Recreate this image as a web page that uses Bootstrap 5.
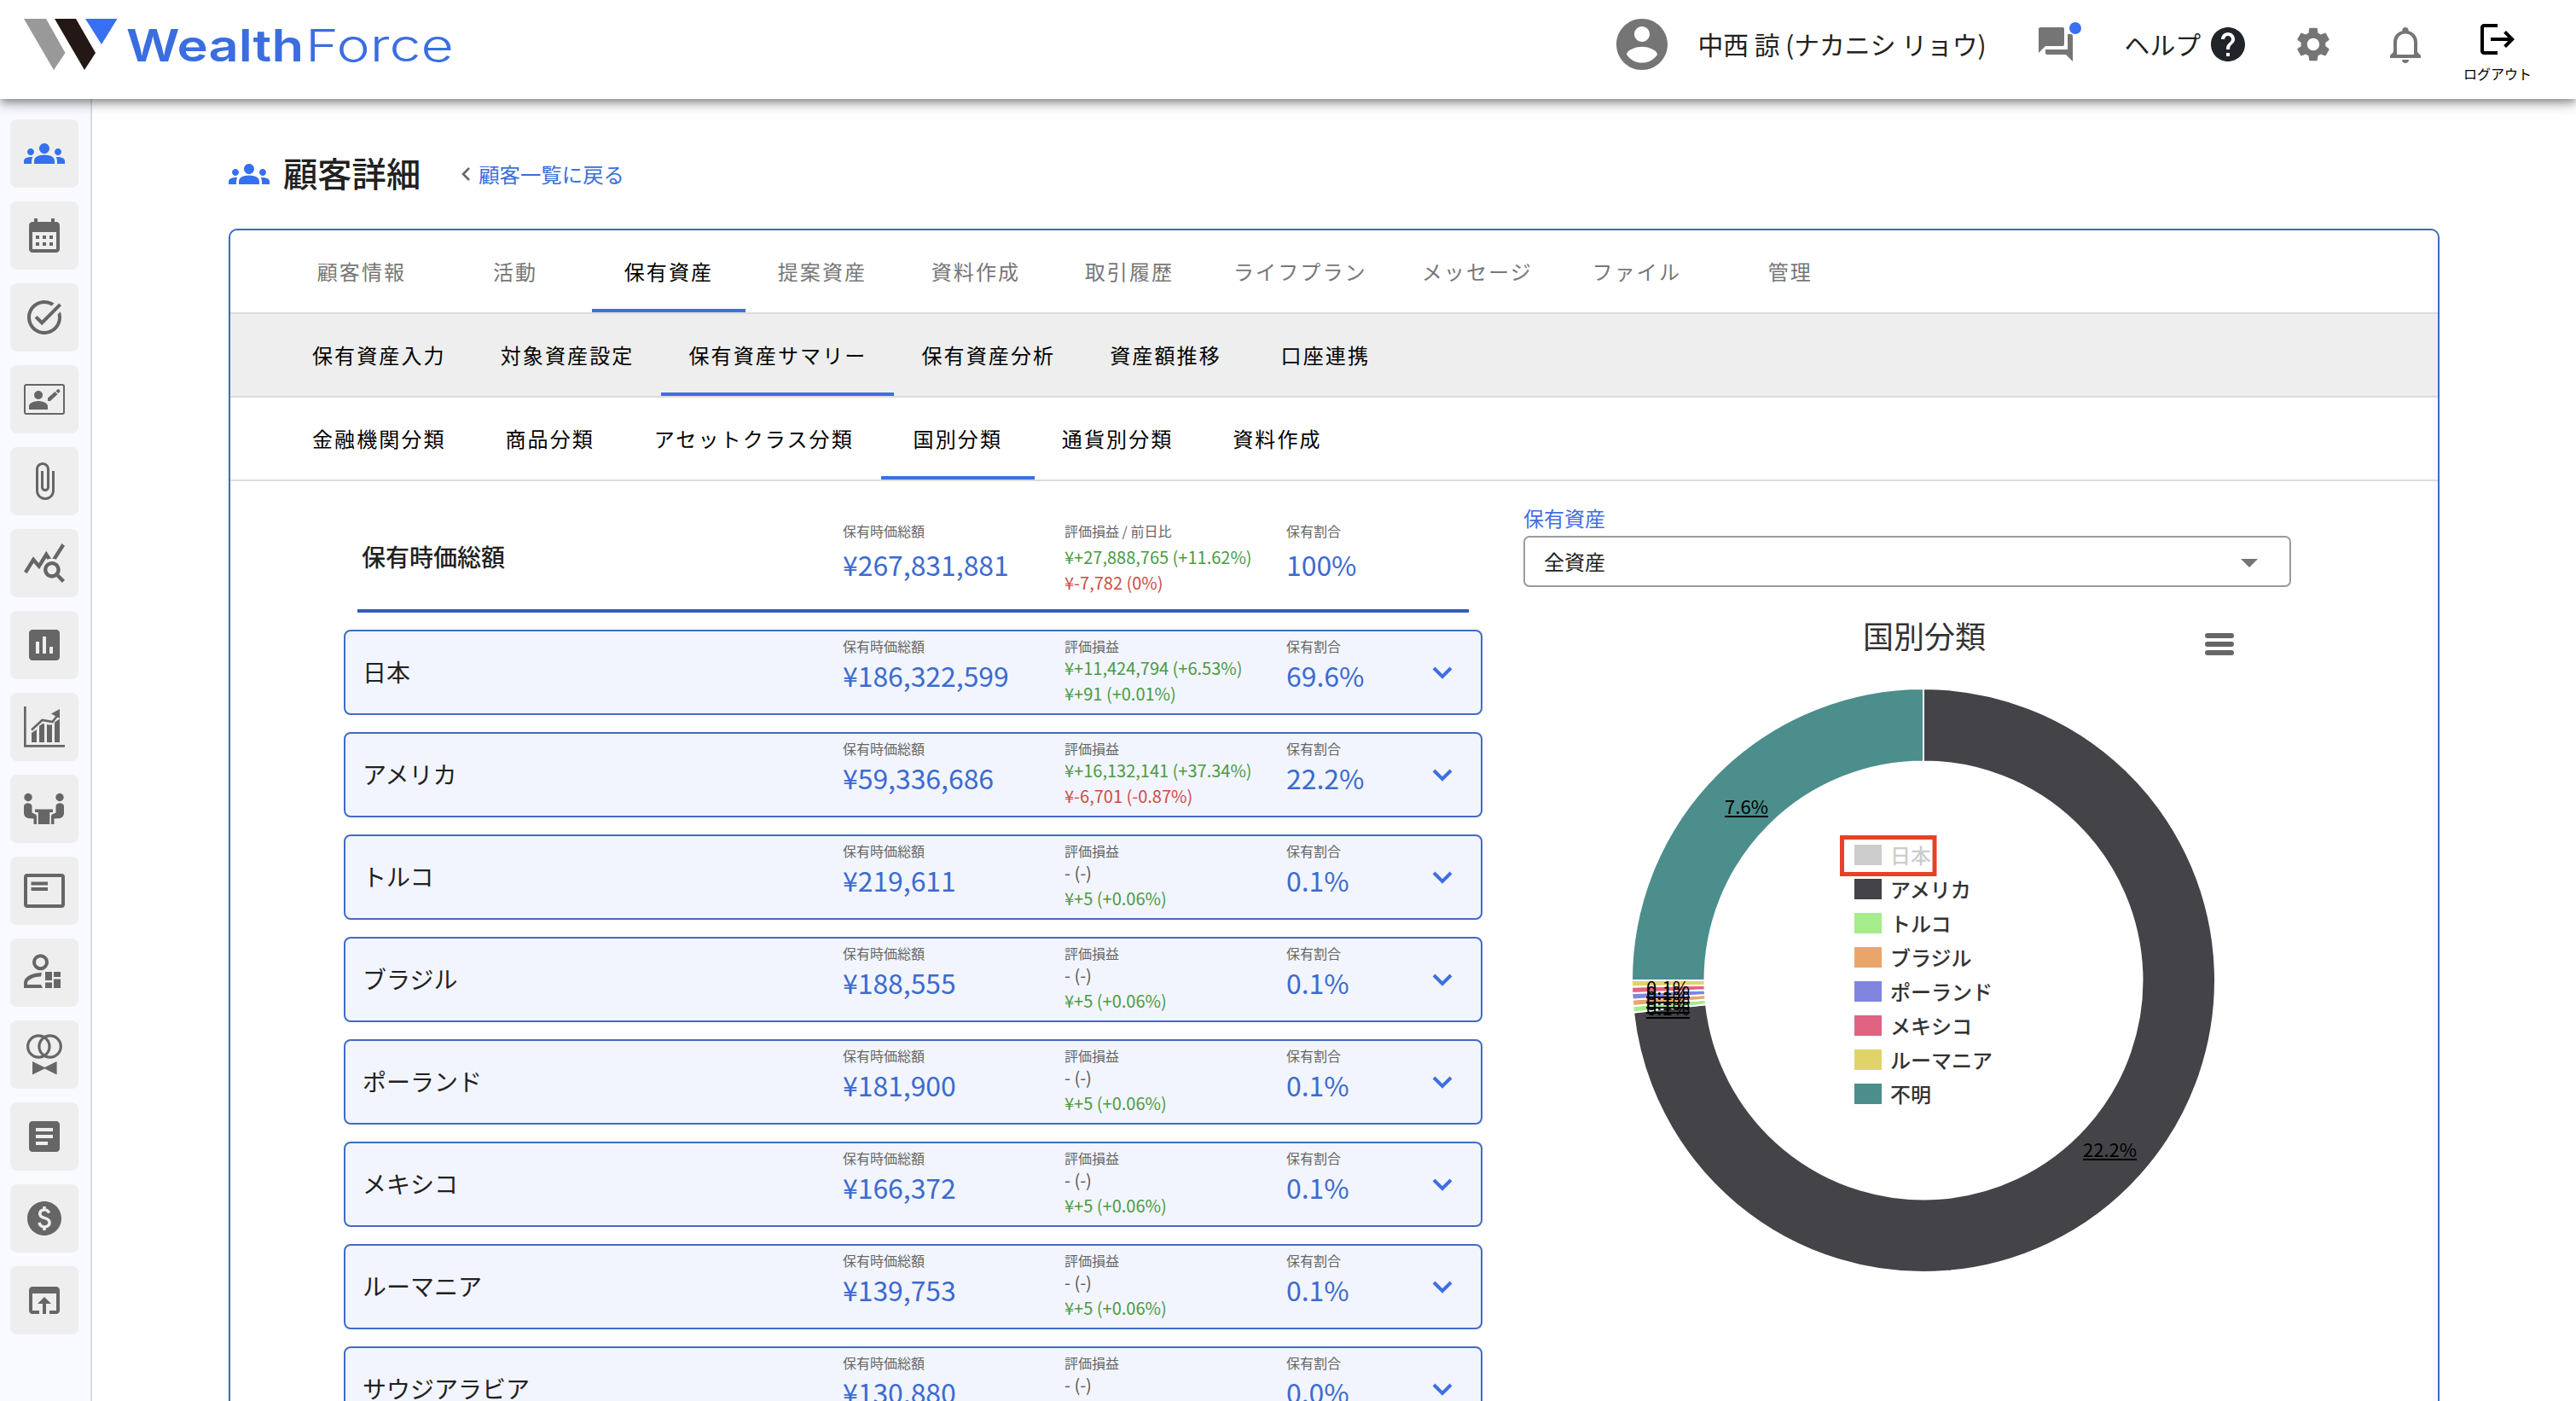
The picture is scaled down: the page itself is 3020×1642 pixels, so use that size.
<!DOCTYPE html>
<html lang="ja">
<head>
    <meta charset="UTF-8">
    <meta name="viewport" content="width=device-width, initial-scale=1.0">
    <title>顧客詳細 - WealthForce</title>
    <link href="https://cdn.jsdelivr.net/npm/bootstrap@5.3.0/dist/css/bootstrap.min.css" rel="stylesheet">
    <style>
        body {
            font-family: "Noto Sans CJK JP", "Noto Sans", sans-serif;
            font-size: 24px;
            line-height: 1.25;
            color: #212121;
            background-color: #fff;
            height: 1642px;
            overflow: hidden;
        }

        svg {
            display: block;
            flex-shrink: 0;
        }

        .i48 {
            width: 48px;
            height: 48px;
            fill: currentColor;
        }

        /* Header */
        .app-header {
            height: 116px;
            z-index: 10;
            padding-left: 28px;
            background-color: #fff;
            box-shadow: 0 4px 8px -2px rgba(0, 0, 0, 0.3), 0 8px 10px rgba(0, 0, 0, 0.16), 0 2px 20px rgba(0, 0, 0, 0.14);
        }

        .header-tools {
            height: 104px;
            color: #757575;
        }

        .header-name {
            font-size: 29.8px;
            color: #212121;
            margin-left: 29px;
        }

        .msg-dot {
            width: 14px;
            height: 14px;
            top: -2px;
            right: -6px;
            background-color: #3770f5;
        }

        .logout-box {
            width: 80px;
            color: #000;
            font-size: 16px;
        }

        /* Side menu */
        .side-menu {
            width: 108px;
            height: 1526px;
            padding: 24px 12px;
            gap: 16px;
            background-color: #f8faff;
            border-right: 2px solid #dadbe3;
        }

        .side-btn {
            width: 80px;
            height: 80px;
            border-radius: 8px;
            background-color: #eee;
            color: #666;
        }

        .side-btn.active,
        .title-icon {
            color: #3770ee;
        }

        /* Page title */
        .page-main {
            padding: 24px 160px 0;
        }

        .title-row {
            height: 128px;
        }

        .title-row h1 {
            font-size: 40.3px;
            font-weight: 500;
            margin: -3px 0 0 16px;
        }

        .back-link {
            font-size: 24.4px;
            color: #3a6fd8;
            text-decoration: none;
        }

        /* Panel and tabs */
        .detail-panel {
            height: 1500px;
            border: 2px solid #4069c0;
            border-radius: 10px;
        }

        .tab-row {
            height: 98px;
            padding-left: 64px;
            border-bottom: 2px solid #dcdcdc;
        }

        .tab-row.sub {
            background-color: #eee;
        }

        .tab-row a {
            min-width: 180px;
            padding: 0 32px;
            letter-spacing: 2.12px;
            color: #000;
            text-decoration: none;
            border-bottom: 4px solid transparent;
            border-top: 4px solid transparent;
        }

        .tab-row.top a {
            color: #777;
        }

        .tab-row.top a.active {
            color: #000;
        }

        .tab-row a.active {
            border-bottom-color: #3f6fe0;
        }

        /* Holdings list */
        .holdings {
            width: 1335px;
            margin-left: 133px;
        }

        .total-row {
            height: 154px;
            margin: 0 16px 20px;
            padding-left: 5px;
            border-bottom: 4px solid #365bbf;
        }

        .asset-row {
            height: 100px;
            margin-bottom: 20px;
            padding-left: 20px;
            border: 2px solid #426bc6;
            border-radius: 8px;
            background-color: #f2f5fd;
        }

        .asset-name {
            width: 563px;
            margin-top: -1px;
            font-size: 28px;
        }

        .total-row .asset-name {
            width: 564px;
            font-weight: 500;
            padding-top: 27px;
        }

        .col-fig {
            width: 260px;
            padding-top: 7px;
            white-space: nowrap;
        }

        .total-row .col-fig {
            padding-top: 48px;
        }

        .col-ratio {
            width: 158px;
        }

        .fig-label {
            font-size: 16px;
            line-height: 20px;
            color: #666;
        }

        .fig-big {
            font-size: 31.9px;
            line-height: 40px;
            color: #3c6bd0;
            padding-top: 4px;
        }

        .fig-small {
            font-size: 20px;
            line-height: 30px;
        }

        .fig-label + .fig-small {
            padding-top: 1px;
        }

        .total-row .fig-big {
            padding-top: 9px;
        }

        .total-row .fig-label + .fig-small {
            padding-top: 6px;
        }

        .up {
            color: #4b9a43;
        }

        .down {
            color: #cf4b43;
        }

        .fig-none {
            color: #555;
        }

        /* Chart column */
        .chart-col {
            width: 900px;
            margin-left: 48px;
            padding-top: 28px;
        }

        .filter-label {
            color: #3f6fe0;
            height: 36px;
            line-height: 30px;
        }

        .filter-select {
            height: 60px;
            padding: 0 37px 0 22px;
            border: 2px solid #9b9b9b;
            border-radius: 7px;
        }

        .chart-col svg text {
            font-family: "Noto Sans CJK JP", sans-serif;
        }
    </style>
</head>
<body>
    <header class="app-header position-relative d-flex justify-content-between">
        <svg width="520" height="104" viewBox="28 0 520 104">
            <path fill="#999" d="M28 22h26l22.5 40L63 82z" />
            <path fill="#231815" d="M64 22h25l23 40-13 20z" />
            <path fill="#3770f0" d="M100 22h37.5L119 52z" />
            <g font-family="Inter, sans-serif" font-size="52" fill="#3a6ee0">
                <text x="148" y="72" font-weight="600" textLength="208" lengthAdjust="spacingAndGlyphs">Wealth</text>
                <text x="358" y="72" font-weight="300" textLength="174" lengthAdjust="spacingAndGlyphs">Force</text>
            </g>
        </svg>
        <div class="header-tools d-flex align-items-center">
            <svg width="72" height="72" viewBox="0 0 24 24" fill="currentColor"><path d="M12 2C6.48 2 2 6.48 2 12s4.48 10 10 10 10-4.48 10-10S17.52 2 12 2zm0 3c1.66 0 3 1.34 3 3s-1.34 3-3 3-3-1.34-3-3 1.34-3 3-3zm0 14.2c-2.5 0-4.71-1.28-6-3.22.03-1.99 4-3.08 6-3.08 1.99 0 5.97 1.09 6 3.08-1.29 1.94-3.5 3.22-6 3.22z" /></svg>
            <span class="header-name text-nowrap">中西 諒 (ナカニシ リョウ)</span>
            <div class="position-relative" style="margin-left: 57px">
                <svg class="i48" viewBox="0 0 24 24"><path d="M21 6h-2v9H6v2c0 .55.45 1 1 1h11l4 4V7c0-.55-.45-1-1-1zm-4 6V3c0-.55-.45-1-1-1H3c-.55 0-1 .45-1 1v14l4-4h10c.55 0 1-.45 1-1z" /></svg>
                <span class="msg-dot position-absolute rounded-circle"></span>
            </div>
            <span class="header-name text-nowrap" style="margin-left: 57px">ヘルプ</span>
            <svg class="i48 text-dark ms-2" viewBox="0 0 24 24"><path d="M12 2C6.48 2 2 6.48 2 12s4.48 10 10 10 10-4.48 10-10S17.52 2 12 2zm1 17h-2v-2h2v2zm2.07-7.75-.9.92C13.45 12.9 13 13.5 13 15h-2v-.5c0-1.1.45-2.1 1.17-2.83l1.24-1.26c.37-.36.59-.86.59-1.41 0-1.1-.9-2-2-2s-2 .9-2 2H8c0-2.21 1.79-4 4-4s4 1.79 4 4c0 .88-.36 1.68-.93 2.25z" /></svg>
            <svg class="i48" style="margin-left: 52px" viewBox="0 0 24 24"><path d="M19.14 12.94c.04-.3.06-.61.06-.94 0-.32-.02-.64-.07-.94l2.03-1.58c.18-.14.23-.41.12-.61l-1.92-3.32c-.12-.22-.37-.29-.59-.22l-2.39.96c-.5-.38-1.03-.7-1.62-.94l-.36-2.54c-.04-.24-.24-.41-.48-.41h-3.84c-.24 0-.43.17-.47.41l-.36 2.54c-.59.24-1.13.57-1.62.94l-2.39-.96c-.22-.08-.47 0-.59.22L2.74 8.87c-.12.21-.08.47.12.61l2.03 1.58c-.05.3-.09.63-.09.94s.02.64.07.94l-2.03 1.58c-.18.14-.23.41-.12.61l1.92 3.32c.12.22.37.29.59.22l2.39-.96c.5.38 1.03.7 1.62.94l.36 2.54c.05.24.24.41.48.41h3.84c.24 0 .44-.17.47-.41l.36-2.54c.59-.24 1.13-.56 1.62-.94l2.39.96c.22.08.47 0 .59-.22l1.92-3.32c.12-.22.07-.47-.12-.61l-2.01-1.58zM12 15.6c-1.98 0-3.6-1.62-3.6-3.6s1.62-3.6 3.6-3.6 3.6 1.62 3.6 3.6-1.62 3.6-3.6 3.6z" /></svg>
            <svg width="36" height="42" style="margin: 2px 0 0 66px" viewBox="0 0 36 42" fill="currentColor"><path fill-rule="evenodd" d="M18 0c2 0 3.7 1.6 3.7 3.6v.7C28 6 32 11 32 17v12l4 4v3H0v-3l4-4V17C4 11 8 6 14.3 4.3v-.7C14.3 1.6 16 0 18 0zm0 7.5c-6 0-10 4.5-10 10.500V32h20V18c0-6-4-10.500-10-10.500zM14 38h8c0 2.500-2 4-4 4s-4-1.500-4-4z" /></svg>
            <div class="logout-box d-flex flex-column align-items-center" style="margin: 13px 52px 0 50px">
                <svg class="i48" viewBox="0 0 24 24"><path d="m17 7-1.41 1.41L18.17 11H8v2h10.17l-2.58 2.58L17 17l5-5zM4 5h8V3H4c-1.1 0-2 .9-2 2v14c0 1.1.9 2 2 2h8v-2H4V5z" /></svg>
                <span class="text-nowrap" style="margin-top: 6px">ログアウト</span>
            </div>
        </div>
    </header>

    <div class="d-flex">
        <nav class="side-menu d-flex flex-column flex-shrink-0" id="side-menu"></nav>

        <main class="page-main flex-grow-1">
            <div class="title-row d-flex align-items-center">
                <svg class="i48 title-icon" viewBox="0 0 24 24"><path id="groups-path" d="M12 12.75c1.63 0 3.07.39 4.24.9 1.08.48 1.76 1.56 1.76 2.73V18H6v-1.61c0-1.18.68-2.26 1.76-2.73 1.17-.52 2.61-.91 4.24-.91zM4 13c1.1 0 2-.9 2-2s-.9-2-2-2-2 .9-2 2 .9 2 2 2zm1.13 1.1c-.37-.06-.74-.1-1.13-.1-.99 0-1.93.21-2.78.58C.48 14.9 0 15.62 0 16.43V18h4.5v-1.61c0-.83.23-1.61.63-2.29zM20 13c1.1 0 2-.9 2-2s-.9-2-2-2-2 .9-2 2 .9 2 2 2zm4 3.43c0-.81-.48-1.53-1.22-1.85-.85-.37-1.79-.58-2.78-.58-.39 0-.76.04-1.13.1.4.68.63 1.46.63 2.29V18H24v-1.57zM12 6c1.66 0 3 1.34 3 3s-1.34 3-3 3-3-1.34-3-3 1.34-3 3-3z" /></svg>
                <h1>顧客詳細</h1>
                <svg width="12" height="18" viewBox="0 0 12 18" style="margin: 0 9px 0 47px"><path d="M10 2 3 9l7 7" fill="none" stroke="#666" stroke-width="2.5" /></svg>
                <a class="back-link" href="#">顧客一覧に戻る</a>
            </div>

            <div class="detail-panel">
                <nav class="tab-row top d-flex">
                    <a href="#" class="d-flex align-items-center justify-content-center">顧客情報</a>
                    <a href="#" class="d-flex align-items-center justify-content-center">活動</a>
                    <a href="#" class="d-flex align-items-center justify-content-center active">保有資産</a>
                    <a href="#" class="d-flex align-items-center justify-content-center">提案資産</a>
                    <a href="#" class="d-flex align-items-center justify-content-center">資料作成</a>
                    <a href="#" class="d-flex align-items-center justify-content-center">取引履歴</a>
                    <a href="#" class="d-flex align-items-center justify-content-center">ライフプラン</a>
                    <a href="#" class="d-flex align-items-center justify-content-center">メッセージ</a>
                    <a href="#" class="d-flex align-items-center justify-content-center">ファイル</a>
                    <a href="#" class="d-flex align-items-center justify-content-center">管理</a>
                </nav>
                <nav class="tab-row sub d-flex">
                    <a href="#" class="d-flex align-items-center justify-content-center">保有資産入力</a>
                    <a href="#" class="d-flex align-items-center justify-content-center">対象資産設定</a>
                    <a href="#" class="d-flex align-items-center justify-content-center active">保有資産サマリー</a>
                    <a href="#" class="d-flex align-items-center justify-content-center">保有資産分析</a>
                    <a href="#" class="d-flex align-items-center justify-content-center">資産額推移</a>
                    <a href="#" class="d-flex align-items-center justify-content-center">口座連携</a>
                </nav>
                <nav class="tab-row d-flex">
                    <a href="#" class="d-flex align-items-center justify-content-center">金融機関分類</a>
                    <a href="#" class="d-flex align-items-center justify-content-center">商品分類</a>
                    <a href="#" class="d-flex align-items-center justify-content-center">アセットクラス分類</a>
                    <a href="#" class="d-flex align-items-center justify-content-center active">国別分類</a>
                    <a href="#" class="d-flex align-items-center justify-content-center">通貨別分類</a>
                    <a href="#" class="d-flex align-items-center justify-content-center">資料作成</a>
                </nav>

                <div class="d-flex">
                    <section class="holdings flex-shrink-0" id="holdings">
                        <div class="total-row d-flex">
                            <div class="asset-name align-self-center">保有時価総額</div>
                            <div class="col-fig">
                                <div class="fig-label">保有時価総額</div>
                                <div class="fig-big">¥267,831,881</div>
                            </div>
                            <div class="col-fig">
                                <div class="fig-label">評価損益 / 前日比</div>
                                <div class="fig-small up">¥+27,888,765 (+11.62%)</div>
                                <div class="fig-small down">¥-7,782 (0%)</div>
                            </div>
                            <div class="col-fig col-ratio">
                                <div class="fig-label">保有割合</div>
                                <div class="fig-big">100%</div>
                            </div>
                        </div>
                    </section>

                    <section class="chart-col flex-shrink-0">
                        <div class="filter-label">保有資産</div>
                        <div class="filter-select d-flex align-items-center justify-content-between">
                            <span>全資産</span>
                            <svg width="20" height="10" viewBox="0 0 20 10" style="margin-top: 4px"><path d="M0 0h20L10 10z" fill="#757575" /></svg>
                        </div>
                        <svg width="900" height="850" viewBox="0 0 900 850" id="chart">
                            <text x="470" y="71.5" font-size="36" text-anchor="middle" fill="#333">国別分類</text>
                            <path d="M802 57h28M802 67h28M802 77h28" stroke="#666" stroke-width="6" stroke-linecap="round" />
                        </svg>
                    </section>
                </div>
            </div>
        </main>
    </div>

    <script src="https://cdn.jsdelivr.net/npm/bootstrap@5.3.0/dist/js/bootstrap.bundle.min.js"></script>
    <script>
        // Side menu icons: [viewBox, svg content]
        const menuIcons = [
            ['0 0 24 24', '<path d="' + document.getElementById('groups-path').getAttribute('d') + '"/>'],
            ['0 0 24 24', '<path d="M19 4h-1V2h-2v2H8V2H6v2H5c-1.11 0-1.99.9-1.99 2L3 20c0 1.1.89 2 2 2h14c1.1 0 2-.9 2-2V6c0-1.1-.9-2-2-2zm0 16H5V10h14v10zM9 14H7v-2h2v2zm4 0h-2v-2h2v2zm4 0h-2v-2h2v2zm-8 4H7v-2h2v2zm4 0h-2v-2h2v2zm4 0h-2v-2h2v2z"/>'],
            ['0 0 24 24', '<path d="M22 5.18 10.59 16.6l-4.24-4.24 1.41-1.41 2.83 2.83 10-10L22 5.18zm-2.21 5.04c.13.57.21 1.17.21 1.78 0 4.42-3.58 8-8 8s-8-3.58-8-8 3.58-8 8-8c1.58 0 3.04.46 4.28 1.25l1.44-1.44C16.1 2.67 14.13 2 12 2 6.48 2 2 6.48 2 12s4.48 10 10 10 10-4.48 10-10c0-1.19-.22-2.33-.6-3.39l-1.61 1.61z"/>'],
            ['0 0 48 48', '<rect x="1" y="7" width="46" height="34" rx="2" fill="none" stroke="currentColor" stroke-width="2"/><circle cx="17" cy="19" r="5"/><path d="M6 36v-4c0-4 7-6 11-6s11 2 11 6v4zM28 26v-3.5l8.5-7.5 3 3-8.5 8zM37.5 14.2l2-1.8c.6-.5 1.2-.5 1.7 0l1 1.1c.5.5.4 1.1-.1 1.6l-1.8 1.8z"/>'],
            ['0 0 24 24', '<path d="M16.5 6v11.5c0 2.21-1.79 4-4 4s-4-1.79-4-4V5c0-1.38 1.12-2.5 2.5-2.5s2.5 1.12 2.5 2.5v10.5c0 .55-.45 1-1 1s-1-.45-1-1V6H10v9.5c0 1.38 1.12 2.5 2.5 2.5s2.5-1.12 2.5-2.5V5c0-2.21-1.79-4-4-4S7 2.79 7 5v12.5c0 3.04 2.46 5.5 5.5 5.5s5.5-2.46 5.5-5.5V6h-1.5z"/>'],
            ['1 1.5 22 22', '<path d="M19.88 18.47c.44-.7.7-1.51.7-2.39 0-2.49-2.01-4.5-4.5-4.5s-4.5 2.01-4.5 4.5 2.01 4.5 4.49 4.5c.88 0 1.7-.26 2.39-.7L21.58 23 23 21.58l-3.12-3.11zm-3.8.11c-1.38 0-2.5-1.12-2.5-2.5s1.12-2.5 2.5-2.5 2.5 1.12 2.5 2.5-1.12 2.5-2.5 2.5zm-.36-8.5c-.74.02-1.45.18-2.1.45l-.55-.83-3.8 6.18-3.01-3.52-3.63 5.81L1 17l5-8 3 3.5L13 6l2.72 4.08zm2.59.5c-.64-.28-1.33-.45-2.05-.49L21.38 2 23 3.18l-4.69 7.4z"/>'],
            ['0 0 24 24', '<path d="M19 3H5c-1.1 0-2 .9-2 2v14c0 1.1.9 2 2 2h14c1.1 0 2-.9 2-2V5c0-1.1-.9-2-2-2zM9 17H7v-7h2v7zm4 0h-2V7h2v10zm4 0h-2v-4h2v4z"/>'],
            ['0 0 48 48', '<path d="M0 0h2.7v45H48v2.7H0zM9 42V31l6-4v15zM18 42V23l4-3 2 .6V42zM27 42V21l4 .8 2-.8v21zM36 42V18.5l6-4V42z"/><path d="M9 27.5 21.5 16l12 2L39 11" fill="none" stroke="currentColor" stroke-width="2.6"/><path d="M32 8.5 42 3v11z"/>'],
            ['0 0 48 48', '<circle cx="5" cy="10.5" r="4.7"/><circle cx="42" cy="10.5" r="4.7"/><path d="M0 21c0-5 9.5-5 9.5 0v7.5l3.5 1.5c1.5.6 2 1.5 2 3v9h-3.5v-6.5L5 35c-3-.5-5-3-5-6zM47 21c0-5-9.5-5-9.5 0v7.5L34 30c-1.5.6-2 1.5-2 3v9h3.5v-6.5L42 35c3-.5 5-3 5-6zM13 24.5h21V28h-3.7v14H16.7V28H13z"/>'],
            ['0 0 48 48', '<rect x="2" y="6" width="44" height="36" rx="2" fill="none" stroke="currentColor" stroke-width="4"/><path d="M8.5 13.5H28v4H8.5zM8.5 20H28v4H8.5z"/>'],
            ['0 0 48 48', '<circle cx="19.5" cy="11.7" r="7.5" fill="none" stroke="currentColor" stroke-width="4"/><path d="M21 24C11 24 0 28 0 36v6h22l-2-4H4v-2c0-3 7-7.5 16-7.5zM25 23h8v10h-8zM35 23h8v6h-8zM25 35.5h8V42h-8zM35 31.5h8V42h-8z"/>'],
            ['0 0 48 48', '<circle cx="17.3" cy="14.5" r="12.7" fill="none" stroke="currentColor" stroke-width="3.2"/><circle cx="30.6" cy="14.5" r="12.7" fill="none" stroke="currentColor" stroke-width="3.2"/><path d="M10 32v15.5l14.3-7 14.3 7V32l-14.3 7z"/>'],
            ['0 0 24 24', '<path d="M19 3H5c-1.1 0-2 .9-2 2v14c0 1.1.9 2 2 2h14c1.1 0 2-.9 2-2V5c0-1.1-.9-2-2-2zm-5 14H7v-2h7v2zm3-4H7v-2h10v2zm0-4H7V7h10v2z"/>'],
            ['0 0 24 24', '<path d="M12 2C6.48 2 2 6.48 2 12s4.48 10 10 10 10-4.48 10-10S17.52 2 12 2zm.88 15.76V19h-1.75v-1.29c-.74-.18-2.39-.77-3.02-2.96l1.65-.67c.06.22.58 2.09 2.4 2.09.93 0 1.98-.48 1.98-1.61 0-.96-.7-1.46-2.28-2.03-1.1-.39-3.35-1.03-3.35-3.31 0-.1.01-2.4 2.62-2.96V5h1.75v1.24c1.84.32 2.51 1.79 2.66 2.23l-1.58.67c-.11-.35-.59-1.34-1.9-1.34-.7 0-1.81.37-1.81 1.39 0 .95.86 1.31 2.64 1.9 2.4.83 3.01 2.05 3.01 3.45 0 2.63-2.5 3.13-3.02 3.21z"/>'],
            ['0 0 24 24', '<path d="M19 4H5c-1.11 0-2 .9-2 2v12c0 1.1.89 2 2 2h4v-2H5V8h14v10h-4v2h4c1.1 0 2-.9 2-2V6c0-1.1-.89-2-2-2zm-7 6-4 4h3v6h2v-6h3l-4-4z"/>']
        ];

        document.getElementById('side-menu').innerHTML = menuIcons.map((icon, i) => `
            <a href="#" class="side-btn d-flex align-items-center justify-content-center ${i === 0 ? 'active' : ''}">
                <svg class="i48" viewBox="${icon[0]}">${icon[1]}</svg>
            </a>`).join('');

        // name, amount, profit/loss, change from previous day, ratio
        const assets = [
            ['日本', '186,322,599', '¥+11,424,794 (+6.53%)', '¥+91 (+0.01%)', '69.6%'],
            ['アメリカ', '59,336,686', '¥+16,132,141 (+37.34%)', '¥-6,701 (-0.87%)', '22.2%'],
            ['トルコ', '219,611', '- (-)', '¥+5 (+0.06%)', '0.1%'],
            ['ブラジル', '188,555', '- (-)', '¥+5 (+0.06%)', '0.1%'],
            ['ポーランド', '181,900', '- (-)', '¥+5 (+0.06%)', '0.1%'],
            ['メキシコ', '166,372', '- (-)', '¥+5 (+0.06%)', '0.1%'],
            ['ルーマニア', '139,753', '- (-)', '¥+5 (+0.06%)', '0.1%'],
            ['サウジアラビア', '130,880', '- (-)', '¥+5 (+0.06%)', '0.0%']
        ];

        function signClass(value) {
            if (value.startsWith('¥+')) return 'up';
            if (value.startsWith('¥-')) return 'down';
            return 'fig-none';
        }

        document.getElementById('holdings').insertAdjacentHTML('beforeend', assets.map(a => `
            <div class="asset-row d-flex">
                <div class="asset-name align-self-center">${a[0]}</div>
                <div class="col-fig">
                    <div class="fig-label">保有時価総額</div>
                    <div class="fig-big">¥${a[1]}</div>
                </div>
                <div class="col-fig">
                    <div class="fig-label">評価損益</div>
                    <div class="fig-small ${signClass(a[2])}">${a[2]}</div>
                    <div class="fig-small ${signClass(a[3])}">${a[3]}</div>
                </div>
                <div class="col-fig col-ratio">
                    <div class="fig-label">保有割合</div>
                    <div class="fig-big">${a[4]}</div>
                </div>
                <svg class="align-self-center" width="50" height="24" viewBox="0 0 50 24"><path d="m15 7 10 10L35 7" fill="none" stroke="#3f6fe0" stroke-width="4"/></svg>
            </div>`).join(''));

        // Donut chart: start and end angles in degrees, clockwise from the top
        const slices = [
            ['アメリカ', '#434348', 0, 263.7],
            ['トルコ', '#a6ec8a', 263.7, 264.96],
            ['ブラジル', '#eaa66a', 264.96, 266.22],
            ['ポーランド', '#8085e0', 266.22, 267.48],
            ['メキシコ', '#e06482', 267.48, 268.74],
            ['ルーマニア', '#e0d468', 268.74, 270],
            ['不明', '#4b8e8c', 270, 360]
        ];
        const cx = 469, cy = 461, R = 342, r = 256.5;

        function point(radius, deg) {
            const t = deg * Math.PI / 180;
            return (cx + radius * Math.sin(t)).toFixed(2) + ' ' + (cy - radius * Math.cos(t)).toFixed(2);
        }

        let svg = '';
        slices.forEach(([name, color, a, b]) => {
            const large = b - a > 180 ? 1 : 0;
            svg += `<path d="M${point(R, a)}A${R} ${R} 0 ${large} 1 ${point(R, b)}L${point(r, b)}A${r} ${r} 0 ${large} 0 ${point(r, a)}Z" fill="${color}" stroke="#fff" stroke-width="2"/>`;
        });

        // Data labels
        const labels = [['22.2%', 687.5, 668], ['0.1%', 169.5, 502], ['0.1%', 169.5, 496], ['0.1%', 169.5, 490], ['0.1%', 169.5, 484], ['0.1%', 169.5, 478], ['7.6%', 261.5, 266]];
        labels.forEach(([text, x, y]) => {
            svg += `<text x="${x}" y="${y}" font-size="22" text-anchor="middle">${text}</text>`;
            const half = text.length > 4 ? 31.5 : 25.5;
            svg += `<path d="M${x - half} ${y + 3}h${half * 2}" stroke="#000" stroke-width="2"/>`;
        });

        // Legend
        [['日本', '#ccc']].concat(slices).forEach(([name, color], i) => {
            const y = 302 + i * 40;
            svg += `<rect x="388" y="${y}" width="32" height="24" fill="${color}"/>`;
            svg += `<text x="430" y="${y + 22}" font-size="24" font-weight="500" fill="${i === 0 ? '#ccc' : '#333'}">${name}</text>`;
        });
        svg += '<rect x="373.5" y="293.5" width="108.5" height="43" fill="none" stroke="#e64028" stroke-width="5"/>';
        document.getElementById('chart').insertAdjacentHTML('beforeend', svg);
    </script>
</body>
</html>
